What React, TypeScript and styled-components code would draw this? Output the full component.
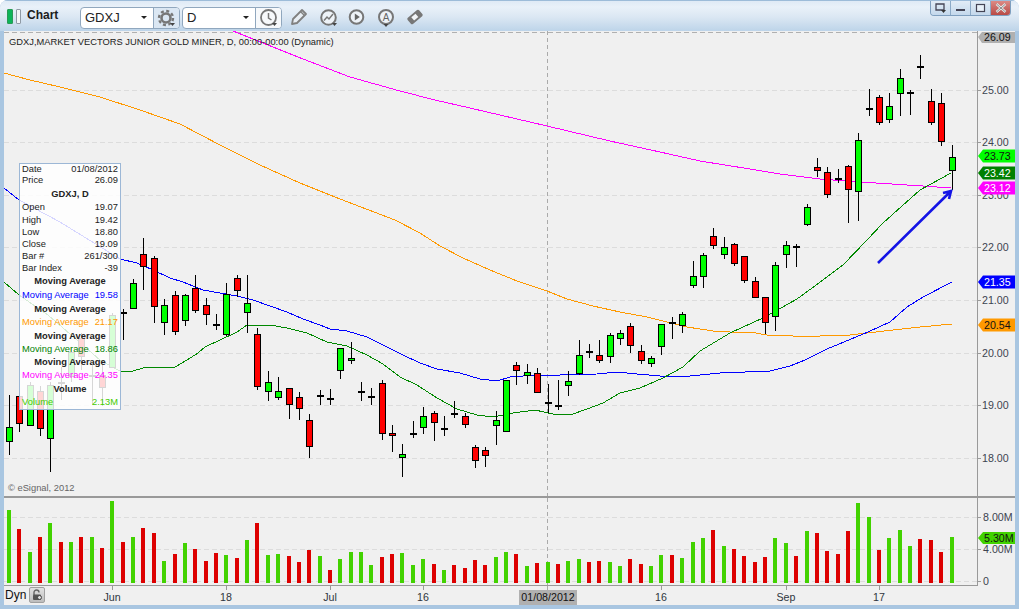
import React from "react";
import styled, { createGlobalStyle } from "styled-components";

const Global = createGlobalStyle`
  html, body { margin: 0; padding: 0; background: #fff; overflow: hidden; }
  #root { width: 1019px; height: 609px; }
`;

const FONT = `"Liberation Sans", Arial, sans-serif`;

const Window = styled.div`
  width: 1019px; height: 609px; display: flex; flex-direction: column;
  background: #a9c6e1; border-radius: 8px 8px 0 0; overflow: hidden; font-family: ${FONT};
`;
const TitleBar = styled.div`
  height: 31px; flex: none; display: flex; align-items: flex-start; box-sizing: border-box;
  padding: 6px 8px 0 7px;
  border-top: 1px solid #9dbcd9;
  background: linear-gradient(#dfeaf6 0, #e9f1f9 6px, #dbe7f3 16px, #bdd4e9 30px);
`;
const Logo = styled.div` display: flex; gap: 3px; margin: 2px 0 0 0; `;
const LogoBar = styled.div<{ $on?: boolean }>`
  width: ${p => (p.$on ? 4 : 3)}px; height: 13px; border: 1px solid ${p => (p.$on ? "#2a9a55" : "#8f9aa5")};
  border-radius: 1px; background: ${p => (p.$on ? "#0db45a" : "#f4f6f8")};
`;
const AppName = styled.div`
  font-weight: bold; font-size: 12px; color: #1c1c1c; line-height: 15px; margin: 1px 0 0 6px; width: 53px;
`;
const Combo = styled.div`
  width: 98px; height: 20px; display: flex; background: #fff; margin-right: 2px;
  border: 1px solid #90a7be; border-radius: 4px; overflow: hidden;
`;
const ComboText = styled.div`
  flex: 1; position: relative; font-size: 13px; line-height: 20px; padding-left: 4px; color: #222;
  &::after {
    content: ""; position: absolute; right: 6px; top: 8px;
    border-left: 3px solid transparent; border-right: 3px solid transparent; border-top: 3px solid #222;
  }
`;
const ComboButton = styled.div<{ $tint?: boolean }>`
  width: 25px; flex: none; border-left: 1px solid #90a7be; display: flex; align-items: center; justify-content: center;
  background: ${p => (p.$tint ? "#dbe7f3" : "#f7f9fb")};
`;
const ToolIcons = styled.div` display: grid; grid-template-columns: repeat(5, 29px); margin: 1px 0 0 6px; `;
const WindowButtons = styled.div`
  margin: -6px 0 0 auto; display: flex; height: 14px; border: 1px solid #7f9fbf; border-top: none;
  border-radius: 0 0 4px 4px; overflow: hidden; background: #c7daed;
`;
const WinButton = styled.div<{ $close?: boolean }>`
  width: 19px; display: flex; align-items: center; justify-content: center;
  border-left: 1px solid #8caac7;
  background: ${p => (p.$close ? "linear-gradient(#dc8a84,#b84a45)" : "linear-gradient(#e2ecf6,#c4d8ec)")};
  &:first-child { border-left: none; }
`;
const Frame = styled.div`
  flex: 1; margin: 0 4px 4px 4px; background: #f0f0f0; display: flex; flex-direction: column; min-height: 0;
`;
const PricePane = styled.div` position: relative; height: 465px; flex: none; `;
const Splitter = styled.div` height: 2px; flex: none; background: #999; `;
const VolumePane = styled.div` height: 88px; flex: none; `;
const AxisRow = styled.div` height: 19px; flex: none; display: flex; `;
const DynBox = styled.div` width: 44px; flex: none; display: flex; align-items: flex-start; `;
const DynLabel = styled.div` font-size: 12px; line-height: 14px; color: #111; margin: 2px 0 0 1px; width: 24px; `;
const LockButton = styled.div`
  width: 14px; height: 14px; margin-top: 1px; border: 1px solid #a0a0a0; border-radius: 2px;
  background: linear-gradient(#e2e2e2,#bdbdbd); display: flex; align-items: center; justify-content: center;
`;
const Drawing = styled.svg` display: block; `;
const AxisLabel = styled.text<{ $c?: string }>`
  font-family: ${FONT}; font-size: 10.67px; fill: ${p => p.$c || "#3c4450"};
`;
const TimeLabel = styled.text<{ $c?: string }>`
  font-family: ${FONT}; font-size: 10.67px; fill: ${p => p.$c || "#2f3640"}; text-anchor: middle;
`;
const ChartNote = styled.text<{ $c?: string }>`
  font-family: ${FONT}; font-size: 9.33px; fill: ${p => p.$c || "#222"};
`;
const TagText = styled.text<{ $c: string }>`
  font-family: ${FONT}; font-size: 10.67px; fill: ${p => p.$c};
`;

const InfoPanel = styled.div`
  position: absolute; left: 15px; top: 132px; width: 96px; height: 245px; padding: 0 2px;
  border: 1px solid #9cb7d6; background: rgba(255,255,255,.84); font-size: 9.33px; color: #222;
  display: flex; flex-direction: column;
`;
const InfoRow = styled.div<{ $h: number; $c?: string }>`
  height: ${p => p.$h}px; line-height: ${p => p.$h}px; display: flex; justify-content: space-between;
  white-space: nowrap; color: ${p => p.$c || "#222"};
`;
const InfoHead = styled.div<{ $h: number }>`
  height: ${p => p.$h}px; line-height: ${p => p.$h}px; text-align: center; font-weight: bold; white-space: nowrap; color: #222;
`;

// wick top, wick bottom, body top, body bottom, colour; doji: wick top, wick bottom, level
type C = [number, number, number, number, "g" | "r"] | [number, number, number];
const candles: C[] = [
  [395,455,427,442,"g"],[388,432,396,424,"r"],[382,426,385,426,"g"],[386,436,391,429,"r"],[382,472,385,439,"g"],
  [367,400,382],[347,382,352,377,"g"],[333,370,338,357,"r"],[365,405,375],[364,406,375,388,"r"],
  [313,368,315,368,"g"],[309,340,312],[279,309,283,309,"g"],[238,290,254,267,"r"],[256,323,258,307,"r"],
  [299,335,305,323,"g"],[291,335,295,332,"r"],[294,326,295,321,"g"],[275,313,288,311,"r"],[298,325,305,315,"r"],
  [314,330,324],[283,336,294,335,"g"],[275,297,278,291,"r"],[275,333,303,313,"g"],[328,390,334,387,"r"],
  [371,401,382,392,"g"],[377,400,391,398,"g"],[388,419,388,405,"r"],[392,420,397,409,"r"],[414,458,420,447,"r"],
  [390,405,395],[389,405,398],[348,379,348,371,"g"],[342,364,358,361,"g"],[382,401,391],
  [388,405,396],[380,440,383,434,"r"],[425,452,433,436,"r"],[444,477,454,458,"g"],[421,438,433],
  [407,434,416,428,"g"],[411,441,413,423,"r"],[416,436,428,430,"g"],[401,418,413,415,"r"],[413,428,416,425,"r"],
  [445,468,447,461,"r"],[447,467,450,456,"r"],[411,445,420,426,"g"],[380,432,380,432,"g"],[362,385,365,371,"r"],
  [364,384,372,376,"g"],[368,393,373,393,"r"],[384,413,402],[380,410,405],[371,396,381,386,"g"],
  [340,375,355,374,"g"],[344,358,351,353,"r"],[340,363,355,361,"r"],[333,363,335,357,"g"],[330,345,333,339,"g"],
  [323,353,326,346,"r"],[345,364,351,361,"r"],[356,367,358,364,"g"],[324,355,324,347,"g"],[317,339,322],
  [312,333,314,326,"g"],[261,288,276,286,"g"],[253,288,255,277,"g"],[228,249,236,246,"r"],[237,259,247,255,"g"],
  [243,266,244,264,"r"],[256,283,256,281,"r"],[277,298,281,298,"r"],[297,334,297,323,"r"],[262,331,265,317,"g"],
  [241,268,245,255,"g"],[244,267,246],[204,226,207,225,"g"],[158,177,167,171,"r"],[167,198,172,195,"r"],
  [169,183,178,180,"r"],[165,223,166,190,"r"],[133,221,140,192,"g"],[89,116,108],[95,125,97,123,"r"],
  [93,123,106,120,"g"],[69,116,78,94,"g"],[90,115,92],[55,79,66],[89,125,101,123,"r"],
  [93,146,103,142,"r"],[145,190,157,171,"g"],
];
const volTops = [60,117,186,141,99,156,156,141,141,174,33,156,141,114,129,213,192,159,177,213,189,195,204,150,99,195,192,198,216,180,198,240,207,186,186,225,201,192,189,225,207,222,240,225,234,210,225,201,186,192,228,219,216,222,213,207,216,213,216,228,207,222,228,195,195,204,156,144,120,168,177,198,216,201,144,159,198,123,129,183,192,123,39,81,180,144,120,168,147,150,186,141];
const volColor =
  "grgrgrgrgr" + "grgrrgrgrr" + "rgrgrggrrr" + "grgggg" + "rrggg" + "rgrrrr" + "ggrgrgrggrr" + "ggrrggr" + "gggrgrrrr" + "ggrgrrrr" + "ggrgggrrrg";

const X = (i: number) => Math.round(8.8 + 10.36 * i);

const blue = "4,188 19,200 60,222 120,259 137,263 153,270 170,278 183,282 203,290 220,293 237,296 253,300 270,306 287,312 303,319 320,325 330,329 347,331 367,337 387,347 403,355 420,363 437,369 460,373 480,379 497,381 510,377 537,375 560,375 597,374 617,372 637,374 660,376 680,377 700,375 720,373 745,372 770,371 790,366 805,360 827,349 868,332 890,322 907,307 923,297 952,282";
const green = "4,282 19,295 48,315 100,360 120,371 133,371 143,368 175,367 187,360 198,353 205,347 220,340 237,332 247,325 270,325 287,328 307,333 327,342 347,346 367,355 383,364 400,377 417,385 437,398 457,409 477,415 493,417 513,413 535,410 553,414 570,415 587,409 603,403 620,393 640,388 663,378 683,367 700,351 720,339 730,333 763,318 797,299 823,280 843,265 867,240 883,223 920,190 951,173";
const orange = "4,73 30,80 60,87 100,97 140,110 180,124 220,145 260,165 300,183 340,199 395,220 420,233 440,246 463,258 490,270 517,281 547,291 567,299 593,306 620,312 647,317 667,322 687,327 713,331 730,332 750,332 767,335 793,336 820,336 850,335 867,333 893,330 920,327 952,324";
const magenta = "233,31 303,59 350,77 400,91 435,100 470,108 547,126 610,141 660,152 700,161 750,169 780,174 820,179 860,182 923,186 951,188";

const priceTicks = [[25,90],[24,142],[23,195],[22,247],[21,300],[20,353],[19,405],[18,458]];
const timeTicks: [string, number][] = [["Jun",112],["18",226],["Jul",330],["16",423],["16",661],["Sep",786],["17",879]];
const tags: [string, number, string, string][] = [
  ["23.73",156,"#00ff00","#111"],["23.42",173,"#008000","#fff"],["23.12",188,"#ff00ff","#fff"],
  ["21.35",282,"#0000ff","#fff"],["20.54",325,"#ff9900","#111"],
];

const Tag = ({ t, y, bg, fg }: { t: string; y: number; bg: string; fg: string }) => (
  <g>
    <polygon points={`978,${y} 983,${y - 6.5} 1015,${y - 6.5} 1015,${y + 6.5} 983,${y + 6.5}`} fill={bg} />
    <TagText $c={fg} x={984} y={y + 4}>{t}</TagText>
  </g>
);

const Line = ({ pts, c }: { pts: string; c: string }) => (
  <polyline points={pts} fill="none" stroke={c} strokeWidth={1} shapeRendering="crispEdges" />
);

const Grid = ({ ys }: { ys: number[] }) => (
  <g shapeRendering="crispEdges">
    {ys.map(y => <line key={y} x1={4} x2={977} y1={y + 0.5} y2={y + 0.5} stroke="#dcdcdc" strokeDasharray="5 3" />)}
  </g>
);

const Candle = ({ c, i }: { c: C; i: number }) => {
  const x = X(i);
  if (c.length === 3) {
    return (
      <g shapeRendering="crispEdges">
        <rect x={x} y={c[0]} width={1} height={c[1] - c[0]} fill="#000" />
        <rect x={x - 3} y={c[2]} width={7} height={2} fill="#000" />
      </g>
    );
  }
  return (
    <g shapeRendering="crispEdges">
      <rect x={x} y={c[0]} width={1} height={c[1] - c[0]} fill="#000" />
      <rect x={x - 2.5} y={c[2] + 0.5} width={6} height={Math.max(c[3] - c[2] - 1, 1)} fill={c[4] === "g" ? "#00ff00" : "#ff0000"} stroke="#000" />
    </g>
  );
};

const Gear = () => (
  <svg width="20" height="20" viewBox="0 0 20 20">
    <circle cx="9" cy="10" r="4.5" fill="none" stroke="#777" strokeWidth="2.6" />
    <circle cx="9" cy="10" r="7" fill="none" stroke="#777" strokeWidth="2.4" strokeDasharray="3 2.5" />
    <path d="M13 15h5l-2.5 3z" fill="#444" />
  </svg>
);
const Clock = () => (
  <svg width="20" height="20" viewBox="0 0 20 20">
    <circle cx="9.5" cy="9.5" r="7.5" fill="none" stroke="#777" strokeWidth="1.8" />
    <path d="M9.5 5v5l3 2" fill="none" stroke="#777" strokeWidth="1.5" />
    <path d="M13 15h5l-2.5 3z" fill="#444" />
  </svg>
);
const Pencil = () => (
  <svg width="18" height="18" viewBox="0 0 18 18">
    <path d="M2 16l1-5L12 2l4 4-9 9z" fill="#e8eef4" stroke="#808080" strokeWidth="1.8" strokeLinejoin="round" />
    <path d="M10.5 3.5l4 4" stroke="#808080" strokeWidth="1.4" />
  </svg>
);
const ChartRing = () => (
  <svg width="20" height="20" viewBox="0 0 20 20">
    <circle cx="9.5" cy="9.5" r="7.3" fill="#eef3f8" stroke="#777" strokeWidth="2" />
    <path d="M5 12.5l3-3.5 2 2 4-5" fill="none" stroke="#777" strokeWidth="1.5" />
    <path d="M13 15h5l-2.5 3z" fill="#444" />
  </svg>
);
const PlayRing = () => (
  <svg width="17" height="18" viewBox="0 0 17 18">
    <circle cx="8.5" cy="9" r="6.8" fill="#eef3f8" stroke="#777" strokeWidth="2" />
    <path d="M6.8 5.6l5 3.4-5 3.4z" fill="#666" />
  </svg>
);
const ARing = () => (
  <svg width="19" height="20" viewBox="0 0 19 20">
    <circle cx="9" cy="9" r="7" fill="#eef3f8" stroke="#777" strokeWidth="2" />
    <text x="9" y="12.5" textAnchor="middle" fontFamily={FONT} fontSize="10" fill="#666">A</text>
    <path d="M6.5 16h5l-2.5 3z" fill="#444" />
  </svg>
);
const Eraser = () => (
  <svg width="18" height="18" viewBox="0 0 18 18">
    <g transform="rotate(-40 9 9)">
      <rect x="1.5" y="5" width="15" height="8" rx="1.5" fill="#777" />
      <rect x="6" y="6.8" width="5.5" height="4.4" fill="#f2f5f8" />
    </g>
  </svg>
);
const LockIcon = () => (
  <svg width="12" height="12" viewBox="0 0 12 12">
    <path d="M3 6V3.5a2.5 2.5 0 0 1 5 0" fill="none" stroke="#666" strokeWidth="1.4" />
    <rect x="2" y="5.5" width="8" height="5.5" rx="1" fill="#555" />
    <circle cx="8.5" cy="8.5" r="2" fill="#ddd" stroke="#444" />
  </svg>
);

export default function App() {
  return (
    <Window>
      <Global />
      <TitleBar>
        <Logo><LogoBar $on /><LogoBar /></Logo>
        <AppName>Chart</AppName>
        <Combo><ComboText>GDXJ</ComboText><ComboButton $tint><Gear /></ComboButton></Combo>
        <Combo><ComboText>D</ComboText><ComboButton><Clock /></ComboButton></Combo>
        <ToolIcons><Pencil /><ChartRing /><PlayRing /><ARing /><Eraser /></ToolIcons>
        <WindowButtons>
          <WinButton>
            <svg width="13" height="12" viewBox="0 0 13 12"><path d="M2 2h8v6H2z" fill="none" stroke="#445" strokeWidth="1.3" /><path d="M7 8h5l-2.5 3z" fill="#333" /></svg>
          </WinButton>
          <WinButton>
            <svg width="11" height="10" viewBox="0 0 11 10"><rect x="1" y="6" width="9" height="2" fill="#445" /></svg>
          </WinButton>
          <WinButton>
            <svg width="11" height="10" viewBox="0 0 11 10"><rect x="1.5" y="1.5" width="8" height="7" fill="#e8f0f8" stroke="#445" strokeWidth="1.2" /></svg>
          </WinButton>
          <WinButton $close>
            <svg width="12" height="10" viewBox="0 0 12 10"><path d="M1.5 1l9 8M10.5 1l-9 8" stroke="#e8e8e8" strokeWidth="2.4" /><path d="M1.5 1l9 8M10.5 1l-9 8" stroke="#777" strokeWidth=".8" /></svg>
          </WinButton>
        </WindowButtons>
      </TitleBar>
      <Frame>
        <PricePane>
          <Drawing width={1011} height={465} viewBox="4 31 1011 465">
            <Grid ys={priceTicks.map(t => t[1])} />
            <line x1={4} x2={977} y1={32.5} y2={32.5} stroke="#b0b0b0" strokeDasharray="5 3" shapeRendering="crispEdges" />
            <line x1={547.5} x2={547.5} y1={31} y2={496} stroke="#aaa" strokeDasharray="4 3" shapeRendering="crispEdges" />
            <Line pts={magenta} c="#ff00ff" />
            <Line pts={orange} c="#ff9900" />
            <Line pts={blue} c="#0000ff" />
            <Line pts={green} c="#008800" />
            {candles.map((c, i) => <Candle key={i} c={c} i={i} />)}
            <path d="M878 263L951 191M943 193L951 191L949 199" fill="none" stroke="#1414e6" strokeWidth="2.6" />
            <line x1={977.5} x2={977.5} y1={31} y2={496} stroke="#999" shapeRendering="crispEdges" />
            {priceTicks.map(([p, y]) => (
              <g key={p}>
                <line x1={977} x2={981} y1={y + 0.5} y2={y + 0.5} stroke="#999" shapeRendering="crispEdges" />
                <AxisLabel x={982} y={y + 4}>{p.toFixed(2)}</AxisLabel>
              </g>
            ))}
            <polygon points="978,37 982,32 1015,32 1015,43 982,43" fill="#b0b0b0" />
            <AxisLabel x={984} y={41} $c="#111">26.09</AxisLabel>
            {tags.map(([t, y, bg, fg]) => <Tag key={t} t={t} y={y} bg={bg} fg={fg} />)}
            <ChartNote x={9} y={45}>GDXJ,MARKET VECTORS JUNIOR GOLD MINER, D, 00:00-00:00 (Dynamic)</ChartNote>
            <ChartNote x={8} y={491} $c="#666">© eSignal, 2012</ChartNote>
          </Drawing>
          <InfoPanel>
            <InfoRow $h={10}><span>Date</span><span>01/08/2012</span></InfoRow>
            <InfoRow $h={13}><span>Price</span><span>26.09</span></InfoRow>
            <InfoHead $h={14}>GDXJ, D</InfoHead>
            <InfoRow $h={13}><span>Open</span><span>19.07</span></InfoRow>
            <InfoRow $h={12}><span>High</span><span>19.42</span></InfoRow>
            <InfoRow $h={12}><span>Low</span><span>18.80</span></InfoRow>
            <InfoRow $h={12}><span>Close</span><span>19.09</span></InfoRow>
            <InfoRow $h={12}><span>Bar #</span><span>261/300</span></InfoRow>
            <InfoRow $h={12}><span>Bar Index</span><span>-39</span></InfoRow>
            <InfoHead $h={15}>Moving Average</InfoHead>
            <InfoRow $h={13} $c="#0000ff"><span>Moving Average</span><span>19.58</span></InfoRow>
            <InfoHead $h={14}>Moving Average</InfoHead>
            <InfoRow $h={13} $c="#ff9900"><span>Moving Average</span><span>21.17</span></InfoRow>
            <InfoHead $h={14}>Moving Average</InfoHead>
            <InfoRow $h={13} $c="#008000"><span>Moving Average</span><span>18.86</span></InfoRow>
            <InfoHead $h={13}>Moving Average</InfoHead>
            <InfoRow $h={13} $c="#ff00ff"><span>Moving Average</span><span>24.35</span></InfoRow>
            <InfoHead $h={14}>Volume</InfoHead>
            <InfoRow $h={13} $c="#44cc00"><span>Volume</span><span>2.13M</span></InfoRow>
          </InfoPanel>
        </PricePane>
        <Splitter />
        <VolumePane>
          <Drawing width={1011} height={88} viewBox="4 498 1011 88">
            <Grid ys={[517, 549, 581]} />
            <line x1={547.5} x2={547.5} y1={498} y2={585} stroke="#aaa" strokeDasharray="4 3" shapeRendering="crispEdges" />
            <g shapeRendering="crispEdges">
              {volTops.map((t, i) => {
                const top = Math.round(490 + t / 3);
                return <rect key={i} x={X(i) - 2} y={top} width={4} height={583 - top} fill={volColor[i] === "g" ? "#42d200" : "#dd0000"} />;
              })}
            </g>
            <line x1={4} x2={977} y1={585.5} y2={585.5} stroke="#999" shapeRendering="crispEdges" />
            <line x1={977.5} x2={977.5} y1={498} y2={586} stroke="#999" shapeRendering="crispEdges" />
            {([["8.00M",517],["4.00M",549],["0",581]] as [string, number][]).map(([l, y]) => (
              <g key={l}>
                <line x1={977} x2={981} y1={y + 0.5} y2={y + 0.5} stroke="#999" shapeRendering="crispEdges" />
                <AxisLabel x={983} y={y + 4}>{l}</AxisLabel>
              </g>
            ))}
            <polygon points="978,538 983,532 1015,532 1015,544 983,544" fill="#42d200" />
            <TagText $c="#111" x={984} y={542}>5.30M</TagText>
          </Drawing>
        </VolumePane>
        <AxisRow>
          <DynBox><DynLabel>Dyn</DynLabel><LockButton><LockIcon /></LockButton></DynBox>
          <Drawing width={967} height={19} viewBox="48 586 967 19">
            {timeTicks.map(([l, x], i) => (
              <g key={i}>
                <line x1={x + 0.5} x2={x + 0.5} y1={586} y2={590} stroke="#999" shapeRendering="crispEdges" />
                <TimeLabel x={x} y={601}>{l}</TimeLabel>
              </g>
            ))}
            <line x1={547.5} x2={547.5} y1={586} y2={590} stroke="#aaa" shapeRendering="crispEdges" />
            <rect x={519} y={590} width={58} height={15} fill="#b0b0b0" />
            <TimeLabel x={548} y={601} $c="#111">01/08/2012</TimeLabel>
          </Drawing>
        </AxisRow>
      </Frame>
    </Window>
  );
}
